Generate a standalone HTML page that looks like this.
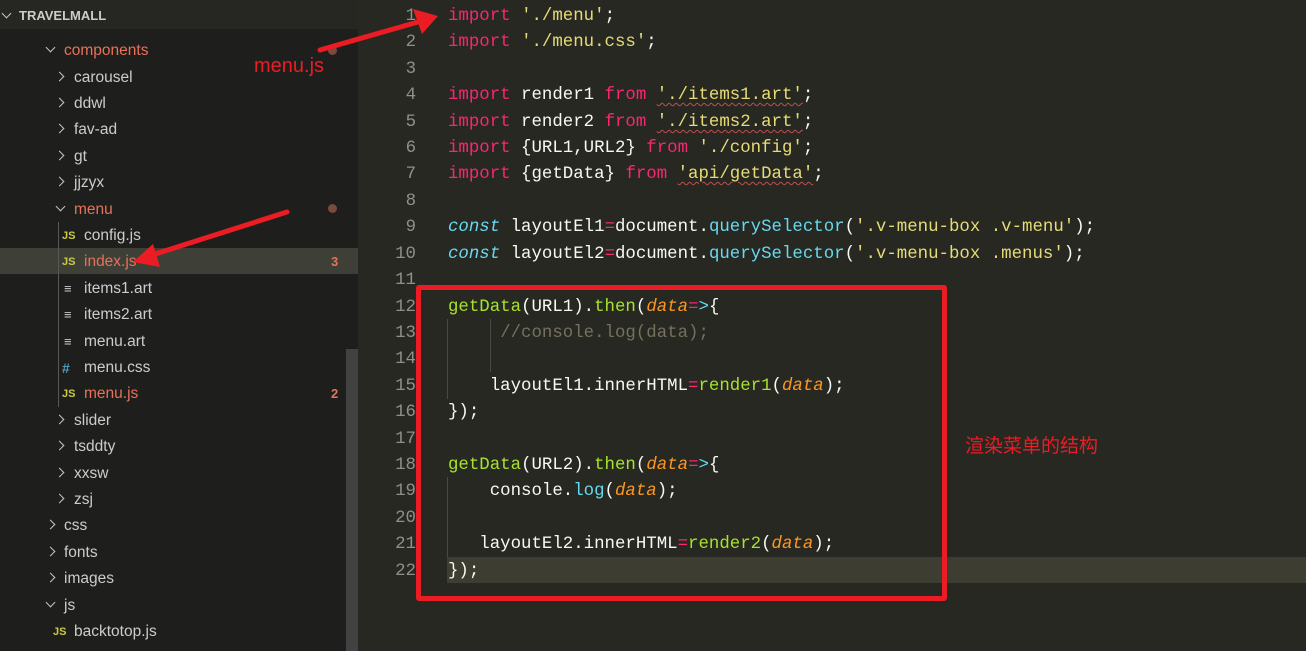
<!DOCTYPE html>
<html><head><meta charset="utf-8"><style>
*{margin:0;padding:0;box-sizing:border-box}
body{width:1306px;height:651px;overflow:hidden;background:#272822;position:relative;font-family:"Liberation Sans","Noto Sans CJK SC",sans-serif}
#side{position:absolute;left:0;top:0;width:358px;height:651px;background:#1e1f1c}
#hdr{position:absolute;left:0;top:0;width:358px;height:29px;background:#262623;color:#cccccc;font-weight:bold;font-size:13px;line-height:31px;padding-left:19px}
.r{position:absolute;left:0;width:346px;height:26px;line-height:28px;font-size:15.5px;color:#cccccc;white-space:nowrap}
.r .t{position:absolute}
.mod{color:#e8715a}
.chev{position:absolute;top:9px;width:7px;height:7px;border-right:1.5px solid #c5c5c5;border-bottom:1.5px solid #c5c5c5}
.cr{transform:rotate(-45deg)}
.cd{transform:rotate(45deg);top:7px}
.js{position:absolute;font-size:11px;font-weight:bold;color:#cbcb41}
.badge{position:absolute;left:331px;font-size:13px;color:#e8715a;font-weight:bold}
.dot{position:absolute;width:9px;height:9px;border-radius:50%;background:#7a4a40}
#code{position:absolute;left:0;top:2px;font-family:"Liberation Mono",monospace;font-size:17.4px}
.ln{position:absolute;width:416px;text-align:right;color:#90908a;height:26px;line-height:26px}
.cl{position:absolute;left:448px;white-space:pre;color:#f8f8f2;height:26px;line-height:26px}
.k{color:#f92672}.s{color:#e6db74}.f{color:#a6e22e}.c{color:#66d9ef;font-style:italic}.b{color:#66d9ef}.p{color:#fd971f;font-style:italic}.cm{color:#75715e}
.sq{text-decoration:underline wavy #c0504d;text-decoration-thickness:1px;text-underline-offset:3px}
</style></head><body>
<div id="side">
<div class="r" style="top:11px;color:#666"><span class="t" style="left:64px;top:-8px">index</span></div>
<div id="hdr"><span class="chev cd" style="left:3px;top:10px"></span>TRAVELMALL</div>

<div class="r mod" style="top:37px"><span class="chev cd" style="left:47px"></span><span class="t" style="left:64px">components</span></div>
<div class="r" style="top:64px"><span class="chev cr" style="left:56px"></span><span class="t" style="left:74px">carousel</span></div>
<div class="r" style="top:90px"><span class="chev cr" style="left:56px"></span><span class="t" style="left:74px">ddwl</span></div>
<div class="r" style="top:116px"><span class="chev cr" style="left:56px"></span><span class="t" style="left:74px">fav-ad</span></div>
<div class="r" style="top:143px"><span class="chev cr" style="left:56px"></span><span class="t" style="left:74px">gt</span></div>
<div class="r" style="top:169px"><span class="chev cr" style="left:56px"></span><span class="t" style="left:74px">jjzyx</span></div>
<div class="r mod" style="top:196px"><span class="chev cd" style="left:57px"></span><span class="t" style="left:74px">menu</span></div>
<div class="r" style="top:222px"><span class="js" style="left:62px">JS</span><span class="t" style="left:84px">config.js</span></div>
<div class="r mod" style="top:248px;background:#3e3f37;width:358px"><span class="js" style="left:62px">JS</span><span class="t" style="left:84px">index.js</span></div>
<div class="r" style="top:275px"><span class="t" style="left:64px;font-size:13px">&#8801;</span><span class="t" style="left:84px">items1.art</span></div>
<div class="r" style="top:301px"><span class="t" style="left:64px;font-size:13px">&#8801;</span><span class="t" style="left:84px">items2.art</span></div>
<div class="r" style="top:328px"><span class="t" style="left:64px;font-size:13px">&#8801;</span><span class="t" style="left:84px">menu.art</span></div>
<div class="r" style="top:354px"><span class="t" style="left:62px;color:#519aba;font-weight:bold;font-size:14px">#</span><span class="t" style="left:84px">menu.css</span></div>
<div class="r mod" style="top:380px"><span class="js" style="left:62px">JS</span><span class="t" style="left:84px">menu.js</span></div>
<div class="r" style="top:407px"><span class="chev cr" style="left:56px"></span><span class="t" style="left:74px">slider</span></div>
<div class="r" style="top:433px"><span class="chev cr" style="left:56px"></span><span class="t" style="left:74px">tsddty</span></div>
<div class="r" style="top:460px"><span class="chev cr" style="left:56px"></span><span class="t" style="left:74px">xxsw</span></div>
<div class="r" style="top:486px"><span class="chev cr" style="left:56px"></span><span class="t" style="left:74px">zsj</span></div>
<div class="r" style="top:512px"><span class="chev cr" style="left:47px"></span><span class="t" style="left:64px">css</span></div>
<div class="r" style="top:539px"><span class="chev cr" style="left:47px"></span><span class="t" style="left:64px">fonts</span></div>
<div class="r" style="top:565px"><span class="chev cr" style="left:47px"></span><span class="t" style="left:64px">images</span></div>
<div class="r" style="top:592px"><span class="chev cd" style="left:47px"></span><span class="t" style="left:64px">js</span></div>
<div class="r" style="top:618px"><span class="js" style="left:53px">JS</span><span class="t" style="left:74px">backtotop.js</span></div>
<div style="position:absolute;left:58px;top:222px;width:1px;height:185px;background:#585858"></div>
<span class="badge" style="top:254px">3</span><span class="badge" style="top:386px">2</span>
<div class="dot" style="left:328px;top:46px"></div><div class="dot" style="left:328px;top:204px"></div>
<div style="position:absolute;left:346px;top:349px;width:12px;height:302px;background:#424242"></div>
</div>

<div style="position:absolute;left:447px;top:557px;width:859px;height:26px;background:#3e3d32"></div>
<div style="position:absolute;left:447px;top:319px;width:1px;height:80px;background:#4a4a44"></div>
<div style="position:absolute;left:490px;top:319px;width:1px;height:53px;background:#4a4a44"></div>
<div style="position:absolute;left:447px;top:477px;width:1px;height:80px;background:#4a4a44"></div>

<div id="code">
<div class="ln" style="top:2px">1</div><div class="ln" style="top:28px">2</div><div class="ln" style="top:55px">3</div><div class="ln" style="top:81px">4</div><div class="ln" style="top:108px">5</div><div class="ln" style="top:134px">6</div><div class="ln" style="top:160px">7</div><div class="ln" style="top:187px">8</div><div class="ln" style="top:213px">9</div><div class="ln" style="top:240px">10</div><div class="ln" style="top:266px">11</div><div class="ln" style="top:293px">12</div><div class="ln" style="top:319px">13</div><div class="ln" style="top:345px">14</div><div class="ln" style="top:372px">15</div><div class="ln" style="top:398px">16</div><div class="ln" style="top:425px">17</div><div class="ln" style="top:451px">18</div><div class="ln" style="top:477px">19</div><div class="ln" style="top:504px">20</div><div class="ln" style="top:530px">21</div><div class="ln" style="top:557px">22</div>

<div class="cl" style="top:2px"><span class="k">import</span> <span class="s">'./menu'</span>;</div>
<div class="cl" style="top:28px"><span class="k">import</span> <span class="s">'./menu.css'</span>;</div>
<div class="cl" style="top:81px"><span class="k">import</span> render1 <span class="k">from</span> <span class="s sq">'./items1.art'</span>;</div>
<div class="cl" style="top:108px"><span class="k">import</span> render2 <span class="k">from</span> <span class="s sq">'./items2.art'</span>;</div>
<div class="cl" style="top:134px"><span class="k">import</span> {URL1,URL2} <span class="k">from</span> <span class="s">'./config'</span>;</div>
<div class="cl" style="top:160px"><span class="k">import</span> {getData} <span class="k">from</span> <span class="s sq">'api/getData'</span>;</div>
<div class="cl" style="top:213px"><span class="c">const</span> layoutEl1<span class="k">=</span>document.<span class="b">querySelector</span>(<span class="s">'.v-menu-box .v-menu'</span>);</div>
<div class="cl" style="top:240px"><span class="c">const</span> layoutEl2<span class="k">=</span>document.<span class="b">querySelector</span>(<span class="s">'.v-menu-box .menus'</span>);</div>
<div class="cl" style="top:293px"><span class="f">getData</span>(URL1).<span class="f">then</span>(<span class="p">data</span><span class="k">=</span><span class="b">&gt;</span>{</div>
<div class="cl" style="top:319px">     <span class="cm">//console.log(data);</span></div>
<div class="cl" style="top:372px">    layoutEl1.innerHTML<span class="k">=</span><span class="f">render1</span>(<span class="p">data</span>);</div>
<div class="cl" style="top:398px">});</div>
<div class="cl" style="top:451px"><span class="f">getData</span>(URL2).<span class="f">then</span>(<span class="p">data</span><span class="k">=</span><span class="b">&gt;</span>{</div>
<div class="cl" style="top:477px">    console.<span class="b">log</span>(<span class="p">data</span>);</div>
<div class="cl" style="top:530px">   layoutEl2.innerHTML<span class="k">=</span><span class="f">render2</span>(<span class="p">data</span>);</div>
<div class="cl" style="top:557px">});</div>
</div>

<div style="position:absolute;left:416px;top:285px;width:531px;height:316px;border:5px solid #ec1c24;border-radius:3px"></div>
<div style="position:absolute;left:965px;top:432px;color:#ec1c24;font-size:19px;line-height:26px;font-family:'Noto Sans CJK SC',sans-serif">渲染菜单的结构</div>
<div style="position:absolute;left:254px;top:53px;color:#ec1c24;font-size:20px;line-height:26px">menu.js</div>
<svg width="1306" height="651" style="position:absolute;left:0;top:0">
<line x1="320" y1="50" x2="418" y2="22" stroke="#ec1c24" stroke-width="5" stroke-linecap="round"/>
<polygon points="438,16 413,9 422,34" fill="#ec1c24"/>
<line x1="287" y1="212" x2="152" y2="255" stroke="#ec1c24" stroke-width="5" stroke-linecap="round"/>
<polygon points="133,262 153,244 160,267" fill="#ec1c24"/>
</svg>
</body></html>
